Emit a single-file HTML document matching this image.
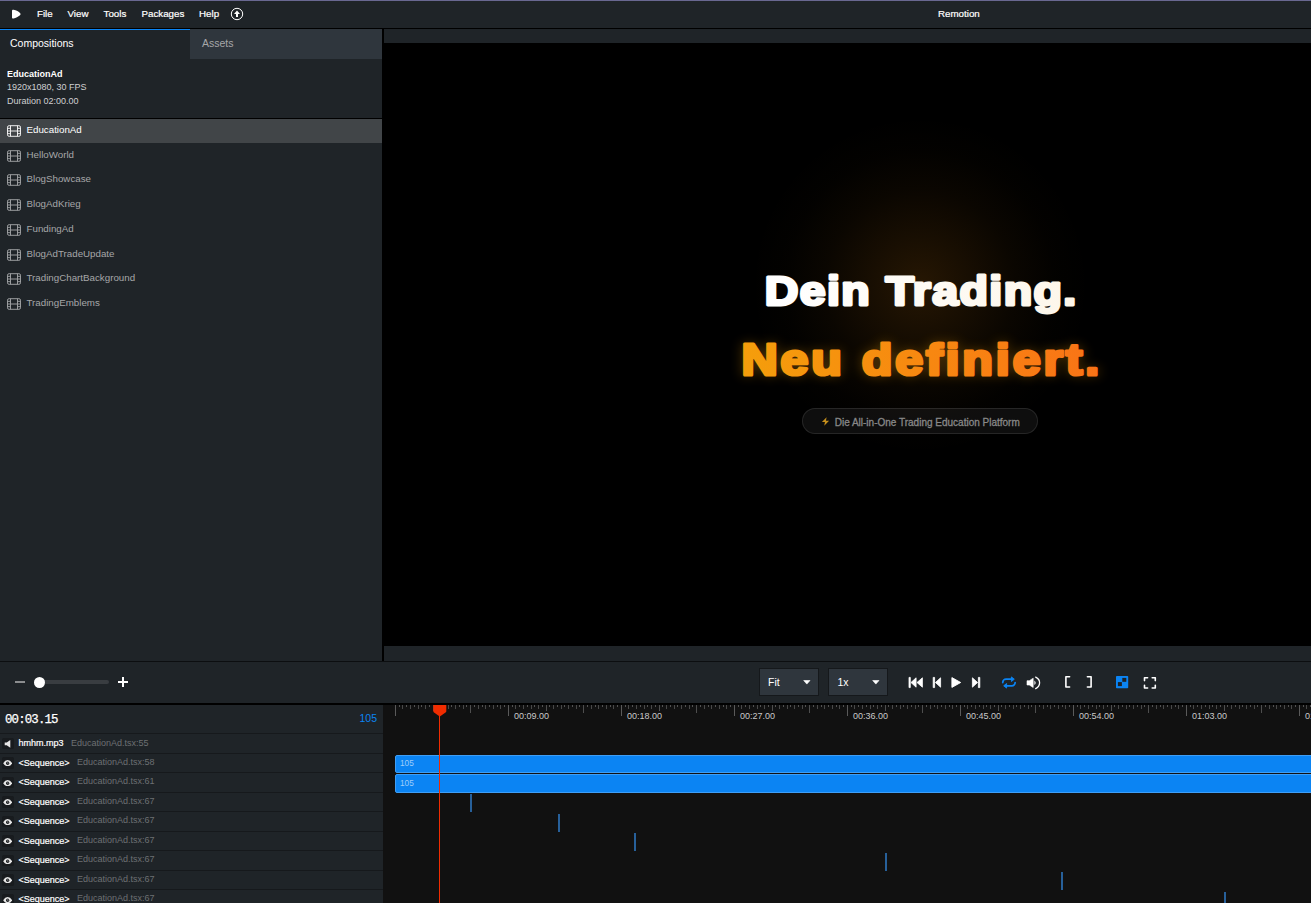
<!DOCTYPE html><html><head><meta charset="utf-8"><title>Remotion</title><style>
*{box-sizing:border-box;margin:0;padding:0}
html,body{width:1311px;height:903px;overflow:hidden;background:#1f2428;font-family:"Liberation Sans",sans-serif;color:#fff}
.abs{position:absolute}
#root{position:relative;width:1311px;height:903px;overflow:hidden;background:#1f2428}
.menu{position:absolute;top:8px;font-size:9.75px;line-height:11px;color:#fff;-webkit-text-stroke:0.2px #fff;white-space:nowrap}
.t{position:absolute;white-space:nowrap}
.comp{position:absolute;left:0;width:382px;height:24.1px}
.comp .nm{position:absolute;left:26.5px;top:4.95px;font-size:9.75px;line-height:11px;color:#a6a7a9;white-space:nowrap}
.comp svg{position:absolute;left:7px;top:5.9px}
.row{position:absolute;left:0;width:382.5px;height:19.5px;border-bottom:1px solid #16191c}
.row .btn{position:absolute;left:2.25px;top:3.4px;width:11.5px;height:11.5px;background:#181b1e;border-radius:1.5px}
.row .lb{position:absolute;left:18.5px;top:4px;font-size:9px;line-height:10px;color:#fff;-webkit-text-stroke:0.2px #fff;white-space:nowrap}
.row .loc{position:absolute;top:3.5px;font-size:9px;line-height:10px;color:#6d7073;white-space:nowrap}
.tick{position:absolute;top:705px;width:1px;background:#666}
.tl{position:absolute;top:710.5px;font-size:9px;line-height:10px;color:#c9c9c9;white-space:nowrap}
.bar{position:absolute;left:395px;width:1000px;height:18px;background:#0b84f3;border:1px solid #3f9ef5;border-radius:2px}
.bar span{position:absolute;left:4px;top:3.5px;font-size:8.25px;line-height:9px;color:#9fcdf9}
.mk{position:absolute;width:2px;height:18px;background:#27609a}
</style></head><body><div id="root">
<div class="abs" style="left:0;top:0;width:1311px;height:1px;background:#696891"></div>
<div class="abs" style="left:0;top:1px;width:1311px;height:27px;background:#1f2428"></div>
<div class="abs" style="left:0;top:28px;width:1311px;height:1px;background:#000"></div>
<svg class="abs" style="left:11px;top:9px" width="11" height="11" viewBox="0 0 11 11"><path d="M2.6 0.75 C5 1.1 8 2.7 9.2 4.3 C9.8 5 9.6 5.7 9 6.2 C7.2 7.6 4.8 8.9 2.6 9.5 C1.6 9.75 1 9.3 1 8.4 L1 1.9 C1 1 1.6 0.6 2.6 0.75 Z" fill="#fff"/></svg>
<div class="menu" style="left:37px">File</div>
<div class="menu" style="left:67.5px">View</div>
<div class="menu" style="left:103.5px">Tools</div>
<div class="menu" style="left:141.5px">Packages</div>
<div class="menu" style="left:199px">Help</div>
<svg class="abs" style="left:230px;top:7px" width="14" height="14" viewBox="0 0 14 14"><circle cx="7" cy="7" r="5.7" fill="none" stroke="#fff" stroke-width="1"/><path d="M7 3.6 L10 6.9 L8 6.9 L8 10 L6 10 L6 6.9 L4 6.9 Z" fill="#fff"/></svg>
<div class="menu" style="left:938px">Remotion</div>
<div class="abs" style="left:0;top:29px;width:190px;height:1.25px;background:#0b84f3"></div>
<div class="abs" style="left:190px;top:29px;width:192px;height:29.75px;background:#2f363d"></div>
<div class="t" style="left:10px;top:37px;font-size:10.5px;line-height:12px;color:#fff">Compositions</div>
<div class="t" style="left:202px;top:37px;font-size:10.5px;line-height:12px;color:#a6a7a9">Assets</div>
<div class="t" style="left:7px;top:68.75px;font-size:9px;line-height:10px;font-weight:bold;color:#fff">EducationAd</div>
<div class="t" style="left:7px;top:81.5px;font-size:9px;line-height:10px;color:#d0d1d2">1920x1080, 30 FPS</div>
<div class="t" style="left:7px;top:95.5px;font-size:9px;line-height:10px;color:#d0d1d2">Duration 02:00.00</div>
<div class="abs" style="left:0;top:118px;width:382px;height:1px;background:#000"></div>
<div class="comp" style="top:118.90px;background:#414548;"><svg width="14" height="12" viewBox="0 0 14 13" preserveAspectRatio="none"><g fill="none" stroke="#f2f2f2" stroke-width="1"><rect x="0.5" y="0.75" width="13" height="11.5" rx="1.6"/><path d="M3.5 0.75V12.25M10.5 0.75V12.25M3.5 6.5H10.5M0.5 3.6H3.5M0.5 6.5H3.5M0.5 9.4H3.5M10.5 3.6H13.5M10.5 6.5H13.5M10.5 9.4H13.5"/></g></svg><div class="nm" style="color:#fff">EducationAd</div></div>
<div class="comp" style="top:143.65px;"><svg width="14" height="12" viewBox="0 0 14 13" preserveAspectRatio="none"><g fill="none" stroke="#9fa1a3" stroke-width="1"><rect x="0.5" y="0.75" width="13" height="11.5" rx="1.6"/><path d="M3.5 0.75V12.25M10.5 0.75V12.25M3.5 6.5H10.5M0.5 3.6H3.5M0.5 6.5H3.5M0.5 9.4H3.5M10.5 3.6H13.5M10.5 6.5H13.5M10.5 9.4H13.5"/></g></svg><div class="nm" style="">HelloWorld</div></div>
<div class="comp" style="top:168.40px;"><svg width="14" height="12" viewBox="0 0 14 13" preserveAspectRatio="none"><g fill="none" stroke="#9fa1a3" stroke-width="1"><rect x="0.5" y="0.75" width="13" height="11.5" rx="1.6"/><path d="M3.5 0.75V12.25M10.5 0.75V12.25M3.5 6.5H10.5M0.5 3.6H3.5M0.5 6.5H3.5M0.5 9.4H3.5M10.5 3.6H13.5M10.5 6.5H13.5M10.5 9.4H13.5"/></g></svg><div class="nm" style="">BlogShowcase</div></div>
<div class="comp" style="top:193.15px;"><svg width="14" height="12" viewBox="0 0 14 13" preserveAspectRatio="none"><g fill="none" stroke="#9fa1a3" stroke-width="1"><rect x="0.5" y="0.75" width="13" height="11.5" rx="1.6"/><path d="M3.5 0.75V12.25M10.5 0.75V12.25M3.5 6.5H10.5M0.5 3.6H3.5M0.5 6.5H3.5M0.5 9.4H3.5M10.5 3.6H13.5M10.5 6.5H13.5M10.5 9.4H13.5"/></g></svg><div class="nm" style="">BlogAdKrieg</div></div>
<div class="comp" style="top:217.90px;"><svg width="14" height="12" viewBox="0 0 14 13" preserveAspectRatio="none"><g fill="none" stroke="#9fa1a3" stroke-width="1"><rect x="0.5" y="0.75" width="13" height="11.5" rx="1.6"/><path d="M3.5 0.75V12.25M10.5 0.75V12.25M3.5 6.5H10.5M0.5 3.6H3.5M0.5 6.5H3.5M0.5 9.4H3.5M10.5 3.6H13.5M10.5 6.5H13.5M10.5 9.4H13.5"/></g></svg><div class="nm" style="">FundingAd</div></div>
<div class="comp" style="top:242.65px;"><svg width="14" height="12" viewBox="0 0 14 13" preserveAspectRatio="none"><g fill="none" stroke="#9fa1a3" stroke-width="1"><rect x="0.5" y="0.75" width="13" height="11.5" rx="1.6"/><path d="M3.5 0.75V12.25M10.5 0.75V12.25M3.5 6.5H10.5M0.5 3.6H3.5M0.5 6.5H3.5M0.5 9.4H3.5M10.5 3.6H13.5M10.5 6.5H13.5M10.5 9.4H13.5"/></g></svg><div class="nm" style="">BlogAdTradeUpdate</div></div>
<div class="comp" style="top:267.40px;"><svg width="14" height="12" viewBox="0 0 14 13" preserveAspectRatio="none"><g fill="none" stroke="#9fa1a3" stroke-width="1"><rect x="0.5" y="0.75" width="13" height="11.5" rx="1.6"/><path d="M3.5 0.75V12.25M10.5 0.75V12.25M3.5 6.5H10.5M0.5 3.6H3.5M0.5 6.5H3.5M0.5 9.4H3.5M10.5 3.6H13.5M10.5 6.5H13.5M10.5 9.4H13.5"/></g></svg><div class="nm" style="">TradingChartBackground</div></div>
<div class="comp" style="top:292.15px;"><svg width="14" height="12" viewBox="0 0 14 13" preserveAspectRatio="none"><g fill="none" stroke="#9fa1a3" stroke-width="1"><rect x="0.5" y="0.75" width="13" height="11.5" rx="1.6"/><path d="M3.5 0.75V12.25M10.5 0.75V12.25M3.5 6.5H10.5M0.5 3.6H3.5M0.5 6.5H3.5M0.5 9.4H3.5M10.5 3.6H13.5M10.5 6.5H13.5M10.5 9.4H13.5"/></g></svg><div class="nm" style="">TradingEmblems</div></div>
<div class="abs" style="left:382px;top:29px;width:2px;height:632px;background:#000"></div>
<div class="abs" style="left:384px;top:43px;width:927px;height:603px;background:#000;overflow:hidden">
<div class="abs" style="left:0;top:0;width:1072px;height:603px;background:radial-gradient(circle at 536px 242px, rgba(245,145,20,0.155) 0px, rgba(245,145,20,0.10) 45px, rgba(245,145,20,0.045) 95px, rgba(245,145,20,0.012) 135px, rgba(245,145,20,0) 170px)"></div>
<svg class="abs" style="left:0;top:0;overflow:visible" width="1072" height="603" viewBox="0 0 1072 603"><defs><linearGradient id="og" gradientUnits="userSpaceOnUse" x1="359" y1="0" x2="715" y2="0"><stop offset="0" stop-color="#f59e0b"/><stop offset="1" stop-color="#f97316"/></linearGradient><linearGradient id="wg" gradientUnits="userSpaceOnUse" x1="382" y1="0" x2="692" y2="0"><stop offset="0" stop-color="#ffffff"/><stop offset="1" stop-color="#fdf6ea"/></linearGradient><linearGradient id="og2" gradientUnits="userSpaceOnUse" x1="0" y1="0" x2="313" y2="0"><stop offset="0" stop-color="#f59e0b"/><stop offset="1" stop-color="#f97316"/></linearGradient><linearGradient id="wg2" gradientUnits="userSpaceOnUse" x1="0" y1="0" x2="273" y2="0"><stop offset="0" stop-color="#ffffff"/><stop offset="1" stop-color="#fdf6ea"/></linearGradient><filter id="glow" x="-10%" y="-60%" width="120%" height="220%"><feGaussianBlur stdDeviation="5.5"/></filter></defs><g font-family="Liberation Sans, sans-serif" font-weight="bold" stroke-linejoin="round"><text transform="translate(357.5,332.2) scale(1.14,1)" font-size="44.0" textLength="313.86" lengthAdjust="spacing" fill="#f59e0b" stroke="#f59e0b" stroke-width="3.2" filter="url(#glow)" opacity="0.3">Neu definiert.</text><text transform="translate(380.8,262.0) scale(1.14,1)" font-size="40.8" textLength="273.16" lengthAdjust="spacing" fill="url(#wg2)" stroke="url(#wg2)" stroke-width="3.0">Dein Trading.</text><text transform="translate(357.5,332.2) scale(1.14,1)" font-size="44.0" textLength="313.86" lengthAdjust="spacing" fill="url(#og2)" stroke="url(#og2)" stroke-width="3.2">Neu definiert.</text></g></svg>
<div class="abs" style="left:418.2px;top:364.6px;width:235.4px;height:26.4px;border-radius:13.2px;background:rgba(255,255,255,0.055);border:1px solid rgba(255,255,255,0.10)"></div>
<svg class="abs" style="left:437px;top:374.3px" width="9" height="9" viewBox="0 0 10 11" preserveAspectRatio="none"><path d="M6.2 0.3 L1 6.2 L4.4 6.2 L3.6 10.7 L9 4.6 L5.5 4.6 Z" fill="#c48e1c"/></svg>
<div class="t" id="bt" style="left:450.7px;top:374px;font-size:10px;line-height:11px;color:#888;-webkit-text-stroke:0.3px #888">Die All-in-One Trading Education Platform</div>
</div>
<div class="abs" style="left:0;top:661px;width:1311px;height:1px;background:#0c0e10"></div>
<div class="abs" style="left:0;top:703px;width:1311px;height:2px;background:#000"></div>
<div class="abs" style="left:15px;top:681.4px;width:10px;height:1.2px;background:#8b8d8f"></div>
<div class="abs" style="left:35px;top:679.7px;width:74px;height:4.6px;border-radius:2.3px;background:#393d41"></div>
<div class="abs" style="left:34.4px;top:676.5px;width:11px;height:11px;border-radius:50%;background:#fff"></div>
<div class="abs" style="left:118px;top:681.4px;width:10px;height:1.2px;background:#fff"></div>
<div class="abs" style="left:122.4px;top:677px;width:1.2px;height:10px;background:#fff"></div>
<div class="abs" style="left:759.4px;top:668px;width:59.2px;height:28.3px;background:#2f363d;border:1px solid #15181b"></div>
<div class="t" style="left:768px;top:676px;font-size:10.5px;line-height:12px;color:#fff">Fit</div>
<svg class="abs" style="left:802.8px;top:680.3px" width="8" height="5" viewBox="0 0 8 5"><path d="M0.7 0.5 L7 0.5 L3.85 4.1 Z" fill="#fff" stroke="#fff" stroke-width="0.6" stroke-linejoin="round"/></svg>
<div class="abs" style="left:828.4px;top:668px;width:59.2px;height:28.3px;background:#2f363d;border:1px solid #15181b"></div>
<div class="t" style="left:837.5px;top:676px;font-size:10.5px;line-height:12px;color:#fff">1x</div>
<svg class="abs" style="left:871.8px;top:680.3px" width="8" height="5" viewBox="0 0 8 5"><path d="M0.7 0.5 L7 0.5 L3.85 4.1 Z" fill="#fff" stroke="#fff" stroke-width="0.6" stroke-linejoin="round"/></svg>
<svg class="abs" style="left:908px;top:676px" width="16" height="13" viewBox="0 0 16 13"><path d="M1 1.4 H2.3 V11.6 H1 Z M3 6.5 L8.1 1.8 V11.2 Z M9 6.5 L14.4 1.8 V11.2 Z" fill="#fff" stroke="#fff" stroke-width="0.8" stroke-linejoin="round"/></svg>
<svg class="abs" style="left:932px;top:676px" width="10" height="13" viewBox="0 0 10 13"><path d="M1.2 1.4 H2.6 V11.6 H1.2 Z M3.4 6.5 L8.6 1.8 V11.2 Z" fill="#fff" stroke="#fff" stroke-width="0.8" stroke-linejoin="round"/></svg>
<svg class="abs" style="left:951px;top:676px" width="11" height="13" viewBox="0 0 11 13"><path d="M0.9 1.6 L9.7 6.5 L0.9 11.4 Z" fill="#fff" stroke="#fff" stroke-width="0.9" stroke-linejoin="round"/></svg>
<svg class="abs" style="left:971px;top:676px" width="10" height="13" viewBox="0 0 10 13"><path d="M8.8 1.4 H7.4 V11.6 H8.8 Z M6.6 6.5 L1.4 1.8 V11.2 Z" fill="#fff" stroke="#fff" stroke-width="0.8" stroke-linejoin="round"/></svg>
<svg class="abs" style="left:1001px;top:676px" width="16" height="14" viewBox="0 0 16 14"><g fill="none" stroke="#0b84f3" stroke-width="1.75" stroke-linecap="round" stroke-linejoin="round"><path d="M1.75 6.5 A3.3 3.3 0 0 1 5.05 3.2 H10.6"/><path d="M14.15 6.5 A3.3 3.3 0 0 1 10.85 9.8 H5.4"/></g><path d="M10.4 0.9 L13.3 3.2 L10.4 5.5 Z M5.6 7.5 L2.7 9.8 L5.6 12.1 Z" fill="#0b84f3" stroke="#0b84f3" stroke-width="0.9" stroke-linejoin="round"/></svg>
<svg class="abs" style="left:1026px;top:675.5px" width="15" height="14" viewBox="0 0 15 14"><path d="M1 4.7 H3.3 L7.2 2.2 V11.5 L3.3 9 H1 Z" fill="#fff" stroke="#fff" stroke-width="0.6" stroke-linejoin="round"/><path d="M8.4 4.6 Q11 6.85 8.4 9.1 Z" fill="#fff"/><path d="M9.7 1.1 Q13.6 3 13.6 6.85 Q13.6 10.7 9.7 12.6" fill="none" stroke="#fff" stroke-width="1.3" stroke-linecap="round"/></svg>
<svg class="abs" style="left:1064px;top:675px" width="8" height="14" viewBox="0 0 8 14"><path d="M5.6 1.8 H1.9 V12 H5.6" fill="none" stroke="#fff" stroke-width="1.6" stroke-linecap="round" stroke-linejoin="round"/></svg>
<svg class="abs" style="left:1085px;top:675px" width="8" height="14" viewBox="0 0 8 14"><path d="M2.4 1.8 H6.1 V12 H2.4" fill="none" stroke="#fff" stroke-width="1.6" stroke-linecap="round" stroke-linejoin="round"/></svg>
<svg class="abs" style="left:1116px;top:676px" width="13" height="13" viewBox="0 0 13 13"><rect x="0" y="0" width="12.2" height="12.2" rx="0.8" fill="#0b84f3"/><rect x="6.3" y="1.9" width="4" height="3.9" fill="#1d2226"/><rect x="1.9" y="6.1" width="4" height="4" fill="#1d2226"/></svg>
<svg class="abs" style="left:1143px;top:676px" width="14" height="14" viewBox="0 0 14 14"><path d="M1.5 4.6 V1.7 H4.6 M9.2 1.7 H12.3 V4.6 M12.3 9.2 V12 H9.2 M4.6 12 H1.5 V9.2" fill="none" stroke="#fff" stroke-width="1.6" stroke-linejoin="round" stroke-linecap="round"/></svg>
<div class="abs" style="left:382.5px;top:705px;width:929px;height:198px;background:#111"></div>
<div class="abs" style="left:0;top:705px;width:382.5px;height:198px;background:#1f2428"></div>
<div class="t" style="left:5px;top:713.6px;font-family:'Liberation Mono',monospace;font-size:12.4px;letter-spacing:-0.85px;line-height:12px;color:#fff;-webkit-text-stroke:0.25px #fff">00:03.15</div>
<div class="t" style="left:359.5px;top:712px;font-size:10.5px;line-height:12px;color:#0b84f3">105</div>
<div class="abs" style="left:0;top:733.4px;width:382.5px;height:1px;background:#16191c"></div>
<div class="row" style="top:734.40px"><div class="btn"><svg style="position:absolute;left:1.75px;top:1.8px" width="8" height="8" viewBox="0 0 8 8"><path d="M0.7 2.5 H2.7 L6.3 0.1 V7.7 L2.7 5.3 H0.7 Z" fill="#e6e6e6"/></svg></div><div class="lb">hmhm.mp3</div><div class="loc" style="left:71px;top:4px">EducationAd.tsx:55</div></div>
<div class="row" style="top:753.90px"><div class="btn"><svg style="position:absolute;left:0.75px;top:2.8px" width="9.3" height="6.4" viewBox="0 0 10 6.4" preserveAspectRatio="none"><path d="M0.2 3.2 Q2.2 0.1 5 0.1 Q7.8 0.1 9.8 3.2 Q7.8 6.3 5 6.3 Q2.2 6.3 0.2 3.2 Z" fill="#e6e6e6"/><circle cx="5" cy="3.2" r="1.75" fill="#181b1e"/><circle cx="5.2" cy="3" r="0.75" fill="#9a9a9a"/></svg></div><div class="lb">&lt;Sequence&gt;</div><div class="loc" style="left:77px;top:3px">EducationAd.tsx:58</div></div>
<div class="row" style="top:773.40px"><div class="btn"><svg style="position:absolute;left:0.75px;top:2.8px" width="9.3" height="6.4" viewBox="0 0 10 6.4" preserveAspectRatio="none"><path d="M0.2 3.2 Q2.2 0.1 5 0.1 Q7.8 0.1 9.8 3.2 Q7.8 6.3 5 6.3 Q2.2 6.3 0.2 3.2 Z" fill="#e6e6e6"/><circle cx="5" cy="3.2" r="1.75" fill="#181b1e"/><circle cx="5.2" cy="3" r="0.75" fill="#9a9a9a"/></svg></div><div class="lb">&lt;Sequence&gt;</div><div class="loc" style="left:77px;top:3px">EducationAd.tsx:61</div></div>
<div class="row" style="top:792.90px"><div class="btn"><svg style="position:absolute;left:0.75px;top:2.8px" width="9.3" height="6.4" viewBox="0 0 10 6.4" preserveAspectRatio="none"><path d="M0.2 3.2 Q2.2 0.1 5 0.1 Q7.8 0.1 9.8 3.2 Q7.8 6.3 5 6.3 Q2.2 6.3 0.2 3.2 Z" fill="#e6e6e6"/><circle cx="5" cy="3.2" r="1.75" fill="#181b1e"/><circle cx="5.2" cy="3" r="0.75" fill="#9a9a9a"/></svg></div><div class="lb">&lt;Sequence&gt;</div><div class="loc" style="left:77px;top:3px">EducationAd.tsx:67</div></div>
<div class="row" style="top:812.40px"><div class="btn"><svg style="position:absolute;left:0.75px;top:2.8px" width="9.3" height="6.4" viewBox="0 0 10 6.4" preserveAspectRatio="none"><path d="M0.2 3.2 Q2.2 0.1 5 0.1 Q7.8 0.1 9.8 3.2 Q7.8 6.3 5 6.3 Q2.2 6.3 0.2 3.2 Z" fill="#e6e6e6"/><circle cx="5" cy="3.2" r="1.75" fill="#181b1e"/><circle cx="5.2" cy="3" r="0.75" fill="#9a9a9a"/></svg></div><div class="lb">&lt;Sequence&gt;</div><div class="loc" style="left:77px;top:3px">EducationAd.tsx:67</div></div>
<div class="row" style="top:831.90px"><div class="btn"><svg style="position:absolute;left:0.75px;top:2.8px" width="9.3" height="6.4" viewBox="0 0 10 6.4" preserveAspectRatio="none"><path d="M0.2 3.2 Q2.2 0.1 5 0.1 Q7.8 0.1 9.8 3.2 Q7.8 6.3 5 6.3 Q2.2 6.3 0.2 3.2 Z" fill="#e6e6e6"/><circle cx="5" cy="3.2" r="1.75" fill="#181b1e"/><circle cx="5.2" cy="3" r="0.75" fill="#9a9a9a"/></svg></div><div class="lb">&lt;Sequence&gt;</div><div class="loc" style="left:77px;top:3px">EducationAd.tsx:67</div></div>
<div class="row" style="top:851.40px"><div class="btn"><svg style="position:absolute;left:0.75px;top:2.8px" width="9.3" height="6.4" viewBox="0 0 10 6.4" preserveAspectRatio="none"><path d="M0.2 3.2 Q2.2 0.1 5 0.1 Q7.8 0.1 9.8 3.2 Q7.8 6.3 5 6.3 Q2.2 6.3 0.2 3.2 Z" fill="#e6e6e6"/><circle cx="5" cy="3.2" r="1.75" fill="#181b1e"/><circle cx="5.2" cy="3" r="0.75" fill="#9a9a9a"/></svg></div><div class="lb">&lt;Sequence&gt;</div><div class="loc" style="left:77px;top:3px">EducationAd.tsx:67</div></div>
<div class="row" style="top:870.90px"><div class="btn"><svg style="position:absolute;left:0.75px;top:2.8px" width="9.3" height="6.4" viewBox="0 0 10 6.4" preserveAspectRatio="none"><path d="M0.2 3.2 Q2.2 0.1 5 0.1 Q7.8 0.1 9.8 3.2 Q7.8 6.3 5 6.3 Q2.2 6.3 0.2 3.2 Z" fill="#e6e6e6"/><circle cx="5" cy="3.2" r="1.75" fill="#181b1e"/><circle cx="5.2" cy="3" r="0.75" fill="#9a9a9a"/></svg></div><div class="lb">&lt;Sequence&gt;</div><div class="loc" style="left:77px;top:3px">EducationAd.tsx:67</div></div>
<div class="row" style="top:890.40px"><div class="btn"><svg style="position:absolute;left:0.75px;top:2.8px" width="9.3" height="6.4" viewBox="0 0 10 6.4" preserveAspectRatio="none"><path d="M0.2 3.2 Q2.2 0.1 5 0.1 Q7.8 0.1 9.8 3.2 Q7.8 6.3 5 6.3 Q2.2 6.3 0.2 3.2 Z" fill="#e6e6e6"/><circle cx="5" cy="3.2" r="1.75" fill="#181b1e"/><circle cx="5.2" cy="3" r="0.75" fill="#9a9a9a"/></svg></div><div class="lb">&lt;Sequence&gt;</div><div class="loc" style="left:77px;top:3px">EducationAd.tsx:67</div></div>
<div class="tick" style="left:394.90px;height:10.6px;background:#5a5a5a"></div>
<div class="tick" style="left:398.67px;height:1.6px;background:#525252"></div>
<div class="tick" style="left:402.43px;height:4px;background:#484848"></div>
<div class="tick" style="left:406.20px;height:1.6px;background:#525252"></div>
<div class="tick" style="left:409.97px;height:4px;background:#484848"></div>
<div class="tick" style="left:413.73px;height:1.6px;background:#525252"></div>
<div class="tick" style="left:417.50px;height:4px;background:#484848"></div>
<div class="tick" style="left:421.27px;height:1.6px;background:#525252"></div>
<div class="tick" style="left:425.03px;height:4px;background:#484848"></div>
<div class="tick" style="left:428.80px;height:1.6px;background:#525252"></div>
<div class="tick" style="left:432.57px;height:6px;background:#4e4e4e"></div>
<div class="tick" style="left:436.33px;height:1.6px;background:#525252"></div>
<div class="tick" style="left:440.10px;height:4px;background:#484848"></div>
<div class="tick" style="left:443.87px;height:1.6px;background:#525252"></div>
<div class="tick" style="left:447.63px;height:4px;background:#484848"></div>
<div class="tick" style="left:451.40px;height:1.6px;background:#525252"></div>
<div class="tick" style="left:455.17px;height:4px;background:#484848"></div>
<div class="tick" style="left:458.93px;height:1.6px;background:#525252"></div>
<div class="tick" style="left:462.70px;height:4px;background:#484848"></div>
<div class="tick" style="left:466.47px;height:1.6px;background:#525252"></div>
<div class="tick" style="left:470.23px;height:8px;background:#4e4e4e"></div>
<div class="tick" style="left:474.00px;height:1.6px;background:#525252"></div>
<div class="tick" style="left:477.77px;height:4px;background:#484848"></div>
<div class="tick" style="left:481.53px;height:1.6px;background:#525252"></div>
<div class="tick" style="left:485.30px;height:4px;background:#484848"></div>
<div class="tick" style="left:489.07px;height:1.6px;background:#525252"></div>
<div class="tick" style="left:492.83px;height:4px;background:#484848"></div>
<div class="tick" style="left:496.60px;height:1.6px;background:#525252"></div>
<div class="tick" style="left:500.37px;height:4px;background:#484848"></div>
<div class="tick" style="left:504.13px;height:1.6px;background:#525252"></div>
<div class="tick" style="left:507.90px;height:10.6px;background:#5a5a5a"></div>
<div class="tl" style="left:514.00px">00:09.00</div>
<div class="tick" style="left:511.67px;height:1.6px;background:#525252"></div>
<div class="tick" style="left:515.43px;height:4px;background:#484848"></div>
<div class="tick" style="left:519.20px;height:1.6px;background:#525252"></div>
<div class="tick" style="left:522.97px;height:4px;background:#484848"></div>
<div class="tick" style="left:526.73px;height:1.6px;background:#525252"></div>
<div class="tick" style="left:530.50px;height:4px;background:#484848"></div>
<div class="tick" style="left:534.27px;height:1.6px;background:#525252"></div>
<div class="tick" style="left:538.03px;height:4px;background:#484848"></div>
<div class="tick" style="left:541.80px;height:1.6px;background:#525252"></div>
<div class="tick" style="left:545.57px;height:6px;background:#4e4e4e"></div>
<div class="tick" style="left:549.33px;height:1.6px;background:#525252"></div>
<div class="tick" style="left:553.10px;height:4px;background:#484848"></div>
<div class="tick" style="left:556.87px;height:1.6px;background:#525252"></div>
<div class="tick" style="left:560.63px;height:4px;background:#484848"></div>
<div class="tick" style="left:564.40px;height:1.6px;background:#525252"></div>
<div class="tick" style="left:568.17px;height:4px;background:#484848"></div>
<div class="tick" style="left:571.93px;height:1.6px;background:#525252"></div>
<div class="tick" style="left:575.70px;height:4px;background:#484848"></div>
<div class="tick" style="left:579.47px;height:1.6px;background:#525252"></div>
<div class="tick" style="left:583.23px;height:8px;background:#4e4e4e"></div>
<div class="tick" style="left:587.00px;height:1.6px;background:#525252"></div>
<div class="tick" style="left:590.77px;height:4px;background:#484848"></div>
<div class="tick" style="left:594.53px;height:1.6px;background:#525252"></div>
<div class="tick" style="left:598.30px;height:4px;background:#484848"></div>
<div class="tick" style="left:602.07px;height:1.6px;background:#525252"></div>
<div class="tick" style="left:605.83px;height:4px;background:#484848"></div>
<div class="tick" style="left:609.60px;height:1.6px;background:#525252"></div>
<div class="tick" style="left:613.37px;height:4px;background:#484848"></div>
<div class="tick" style="left:617.13px;height:1.6px;background:#525252"></div>
<div class="tick" style="left:620.90px;height:10.6px;background:#5a5a5a"></div>
<div class="tl" style="left:627.00px">00:18.00</div>
<div class="tick" style="left:624.67px;height:1.6px;background:#525252"></div>
<div class="tick" style="left:628.43px;height:4px;background:#484848"></div>
<div class="tick" style="left:632.20px;height:1.6px;background:#525252"></div>
<div class="tick" style="left:635.97px;height:4px;background:#484848"></div>
<div class="tick" style="left:639.73px;height:1.6px;background:#525252"></div>
<div class="tick" style="left:643.50px;height:4px;background:#484848"></div>
<div class="tick" style="left:647.27px;height:1.6px;background:#525252"></div>
<div class="tick" style="left:651.03px;height:4px;background:#484848"></div>
<div class="tick" style="left:654.80px;height:1.6px;background:#525252"></div>
<div class="tick" style="left:658.57px;height:6px;background:#4e4e4e"></div>
<div class="tick" style="left:662.33px;height:1.6px;background:#525252"></div>
<div class="tick" style="left:666.10px;height:4px;background:#484848"></div>
<div class="tick" style="left:669.87px;height:1.6px;background:#525252"></div>
<div class="tick" style="left:673.63px;height:4px;background:#484848"></div>
<div class="tick" style="left:677.40px;height:1.6px;background:#525252"></div>
<div class="tick" style="left:681.17px;height:4px;background:#484848"></div>
<div class="tick" style="left:684.93px;height:1.6px;background:#525252"></div>
<div class="tick" style="left:688.70px;height:4px;background:#484848"></div>
<div class="tick" style="left:692.47px;height:1.6px;background:#525252"></div>
<div class="tick" style="left:696.23px;height:8px;background:#4e4e4e"></div>
<div class="tick" style="left:700.00px;height:1.6px;background:#525252"></div>
<div class="tick" style="left:703.77px;height:4px;background:#484848"></div>
<div class="tick" style="left:707.53px;height:1.6px;background:#525252"></div>
<div class="tick" style="left:711.30px;height:4px;background:#484848"></div>
<div class="tick" style="left:715.07px;height:1.6px;background:#525252"></div>
<div class="tick" style="left:718.83px;height:4px;background:#484848"></div>
<div class="tick" style="left:722.60px;height:1.6px;background:#525252"></div>
<div class="tick" style="left:726.37px;height:4px;background:#484848"></div>
<div class="tick" style="left:730.13px;height:1.6px;background:#525252"></div>
<div class="tick" style="left:733.90px;height:10.6px;background:#5a5a5a"></div>
<div class="tl" style="left:740.00px">00:27.00</div>
<div class="tick" style="left:737.67px;height:1.6px;background:#525252"></div>
<div class="tick" style="left:741.43px;height:4px;background:#484848"></div>
<div class="tick" style="left:745.20px;height:1.6px;background:#525252"></div>
<div class="tick" style="left:748.97px;height:4px;background:#484848"></div>
<div class="tick" style="left:752.73px;height:1.6px;background:#525252"></div>
<div class="tick" style="left:756.50px;height:4px;background:#484848"></div>
<div class="tick" style="left:760.27px;height:1.6px;background:#525252"></div>
<div class="tick" style="left:764.03px;height:4px;background:#484848"></div>
<div class="tick" style="left:767.80px;height:1.6px;background:#525252"></div>
<div class="tick" style="left:771.57px;height:6px;background:#4e4e4e"></div>
<div class="tick" style="left:775.33px;height:1.6px;background:#525252"></div>
<div class="tick" style="left:779.10px;height:4px;background:#484848"></div>
<div class="tick" style="left:782.87px;height:1.6px;background:#525252"></div>
<div class="tick" style="left:786.63px;height:4px;background:#484848"></div>
<div class="tick" style="left:790.40px;height:1.6px;background:#525252"></div>
<div class="tick" style="left:794.17px;height:4px;background:#484848"></div>
<div class="tick" style="left:797.93px;height:1.6px;background:#525252"></div>
<div class="tick" style="left:801.70px;height:4px;background:#484848"></div>
<div class="tick" style="left:805.47px;height:1.6px;background:#525252"></div>
<div class="tick" style="left:809.23px;height:8px;background:#4e4e4e"></div>
<div class="tick" style="left:813.00px;height:1.6px;background:#525252"></div>
<div class="tick" style="left:816.77px;height:4px;background:#484848"></div>
<div class="tick" style="left:820.53px;height:1.6px;background:#525252"></div>
<div class="tick" style="left:824.30px;height:4px;background:#484848"></div>
<div class="tick" style="left:828.07px;height:1.6px;background:#525252"></div>
<div class="tick" style="left:831.83px;height:4px;background:#484848"></div>
<div class="tick" style="left:835.60px;height:1.6px;background:#525252"></div>
<div class="tick" style="left:839.37px;height:4px;background:#484848"></div>
<div class="tick" style="left:843.13px;height:1.6px;background:#525252"></div>
<div class="tick" style="left:846.90px;height:10.6px;background:#5a5a5a"></div>
<div class="tl" style="left:853.00px">00:36.00</div>
<div class="tick" style="left:850.67px;height:1.6px;background:#525252"></div>
<div class="tick" style="left:854.43px;height:4px;background:#484848"></div>
<div class="tick" style="left:858.20px;height:1.6px;background:#525252"></div>
<div class="tick" style="left:861.97px;height:4px;background:#484848"></div>
<div class="tick" style="left:865.73px;height:1.6px;background:#525252"></div>
<div class="tick" style="left:869.50px;height:4px;background:#484848"></div>
<div class="tick" style="left:873.27px;height:1.6px;background:#525252"></div>
<div class="tick" style="left:877.03px;height:4px;background:#484848"></div>
<div class="tick" style="left:880.80px;height:1.6px;background:#525252"></div>
<div class="tick" style="left:884.57px;height:6px;background:#4e4e4e"></div>
<div class="tick" style="left:888.33px;height:1.6px;background:#525252"></div>
<div class="tick" style="left:892.10px;height:4px;background:#484848"></div>
<div class="tick" style="left:895.87px;height:1.6px;background:#525252"></div>
<div class="tick" style="left:899.63px;height:4px;background:#484848"></div>
<div class="tick" style="left:903.40px;height:1.6px;background:#525252"></div>
<div class="tick" style="left:907.17px;height:4px;background:#484848"></div>
<div class="tick" style="left:910.93px;height:1.6px;background:#525252"></div>
<div class="tick" style="left:914.70px;height:4px;background:#484848"></div>
<div class="tick" style="left:918.47px;height:1.6px;background:#525252"></div>
<div class="tick" style="left:922.23px;height:8px;background:#4e4e4e"></div>
<div class="tick" style="left:926.00px;height:1.6px;background:#525252"></div>
<div class="tick" style="left:929.77px;height:4px;background:#484848"></div>
<div class="tick" style="left:933.53px;height:1.6px;background:#525252"></div>
<div class="tick" style="left:937.30px;height:4px;background:#484848"></div>
<div class="tick" style="left:941.07px;height:1.6px;background:#525252"></div>
<div class="tick" style="left:944.83px;height:4px;background:#484848"></div>
<div class="tick" style="left:948.60px;height:1.6px;background:#525252"></div>
<div class="tick" style="left:952.37px;height:4px;background:#484848"></div>
<div class="tick" style="left:956.13px;height:1.6px;background:#525252"></div>
<div class="tick" style="left:959.90px;height:10.6px;background:#5a5a5a"></div>
<div class="tl" style="left:966.00px">00:45.00</div>
<div class="tick" style="left:963.67px;height:1.6px;background:#525252"></div>
<div class="tick" style="left:967.43px;height:4px;background:#484848"></div>
<div class="tick" style="left:971.20px;height:1.6px;background:#525252"></div>
<div class="tick" style="left:974.97px;height:4px;background:#484848"></div>
<div class="tick" style="left:978.73px;height:1.6px;background:#525252"></div>
<div class="tick" style="left:982.50px;height:4px;background:#484848"></div>
<div class="tick" style="left:986.27px;height:1.6px;background:#525252"></div>
<div class="tick" style="left:990.03px;height:4px;background:#484848"></div>
<div class="tick" style="left:993.80px;height:1.6px;background:#525252"></div>
<div class="tick" style="left:997.57px;height:6px;background:#4e4e4e"></div>
<div class="tick" style="left:1001.33px;height:1.6px;background:#525252"></div>
<div class="tick" style="left:1005.10px;height:4px;background:#484848"></div>
<div class="tick" style="left:1008.87px;height:1.6px;background:#525252"></div>
<div class="tick" style="left:1012.63px;height:4px;background:#484848"></div>
<div class="tick" style="left:1016.40px;height:1.6px;background:#525252"></div>
<div class="tick" style="left:1020.17px;height:4px;background:#484848"></div>
<div class="tick" style="left:1023.93px;height:1.6px;background:#525252"></div>
<div class="tick" style="left:1027.70px;height:4px;background:#484848"></div>
<div class="tick" style="left:1031.47px;height:1.6px;background:#525252"></div>
<div class="tick" style="left:1035.23px;height:8px;background:#4e4e4e"></div>
<div class="tick" style="left:1039.00px;height:1.6px;background:#525252"></div>
<div class="tick" style="left:1042.77px;height:4px;background:#484848"></div>
<div class="tick" style="left:1046.53px;height:1.6px;background:#525252"></div>
<div class="tick" style="left:1050.30px;height:4px;background:#484848"></div>
<div class="tick" style="left:1054.07px;height:1.6px;background:#525252"></div>
<div class="tick" style="left:1057.83px;height:4px;background:#484848"></div>
<div class="tick" style="left:1061.60px;height:1.6px;background:#525252"></div>
<div class="tick" style="left:1065.37px;height:4px;background:#484848"></div>
<div class="tick" style="left:1069.13px;height:1.6px;background:#525252"></div>
<div class="tick" style="left:1072.90px;height:10.6px;background:#5a5a5a"></div>
<div class="tl" style="left:1079.00px">00:54.00</div>
<div class="tick" style="left:1076.67px;height:1.6px;background:#525252"></div>
<div class="tick" style="left:1080.43px;height:4px;background:#484848"></div>
<div class="tick" style="left:1084.20px;height:1.6px;background:#525252"></div>
<div class="tick" style="left:1087.97px;height:4px;background:#484848"></div>
<div class="tick" style="left:1091.73px;height:1.6px;background:#525252"></div>
<div class="tick" style="left:1095.50px;height:4px;background:#484848"></div>
<div class="tick" style="left:1099.27px;height:1.6px;background:#525252"></div>
<div class="tick" style="left:1103.03px;height:4px;background:#484848"></div>
<div class="tick" style="left:1106.80px;height:1.6px;background:#525252"></div>
<div class="tick" style="left:1110.57px;height:6px;background:#4e4e4e"></div>
<div class="tick" style="left:1114.33px;height:1.6px;background:#525252"></div>
<div class="tick" style="left:1118.10px;height:4px;background:#484848"></div>
<div class="tick" style="left:1121.87px;height:1.6px;background:#525252"></div>
<div class="tick" style="left:1125.63px;height:4px;background:#484848"></div>
<div class="tick" style="left:1129.40px;height:1.6px;background:#525252"></div>
<div class="tick" style="left:1133.17px;height:4px;background:#484848"></div>
<div class="tick" style="left:1136.93px;height:1.6px;background:#525252"></div>
<div class="tick" style="left:1140.70px;height:4px;background:#484848"></div>
<div class="tick" style="left:1144.47px;height:1.6px;background:#525252"></div>
<div class="tick" style="left:1148.23px;height:8px;background:#4e4e4e"></div>
<div class="tick" style="left:1152.00px;height:1.6px;background:#525252"></div>
<div class="tick" style="left:1155.77px;height:4px;background:#484848"></div>
<div class="tick" style="left:1159.53px;height:1.6px;background:#525252"></div>
<div class="tick" style="left:1163.30px;height:4px;background:#484848"></div>
<div class="tick" style="left:1167.07px;height:1.6px;background:#525252"></div>
<div class="tick" style="left:1170.83px;height:4px;background:#484848"></div>
<div class="tick" style="left:1174.60px;height:1.6px;background:#525252"></div>
<div class="tick" style="left:1178.37px;height:4px;background:#484848"></div>
<div class="tick" style="left:1182.13px;height:1.6px;background:#525252"></div>
<div class="tick" style="left:1185.90px;height:10.6px;background:#5a5a5a"></div>
<div class="tl" style="left:1192.00px">01:03.00</div>
<div class="tick" style="left:1189.67px;height:1.6px;background:#525252"></div>
<div class="tick" style="left:1193.43px;height:4px;background:#484848"></div>
<div class="tick" style="left:1197.20px;height:1.6px;background:#525252"></div>
<div class="tick" style="left:1200.97px;height:4px;background:#484848"></div>
<div class="tick" style="left:1204.73px;height:1.6px;background:#525252"></div>
<div class="tick" style="left:1208.50px;height:4px;background:#484848"></div>
<div class="tick" style="left:1212.27px;height:1.6px;background:#525252"></div>
<div class="tick" style="left:1216.03px;height:4px;background:#484848"></div>
<div class="tick" style="left:1219.80px;height:1.6px;background:#525252"></div>
<div class="tick" style="left:1223.57px;height:6px;background:#4e4e4e"></div>
<div class="tick" style="left:1227.33px;height:1.6px;background:#525252"></div>
<div class="tick" style="left:1231.10px;height:4px;background:#484848"></div>
<div class="tick" style="left:1234.87px;height:1.6px;background:#525252"></div>
<div class="tick" style="left:1238.63px;height:4px;background:#484848"></div>
<div class="tick" style="left:1242.40px;height:1.6px;background:#525252"></div>
<div class="tick" style="left:1246.17px;height:4px;background:#484848"></div>
<div class="tick" style="left:1249.93px;height:1.6px;background:#525252"></div>
<div class="tick" style="left:1253.70px;height:4px;background:#484848"></div>
<div class="tick" style="left:1257.47px;height:1.6px;background:#525252"></div>
<div class="tick" style="left:1261.23px;height:8px;background:#4e4e4e"></div>
<div class="tick" style="left:1265.00px;height:1.6px;background:#525252"></div>
<div class="tick" style="left:1268.77px;height:4px;background:#484848"></div>
<div class="tick" style="left:1272.53px;height:1.6px;background:#525252"></div>
<div class="tick" style="left:1276.30px;height:4px;background:#484848"></div>
<div class="tick" style="left:1280.07px;height:1.6px;background:#525252"></div>
<div class="tick" style="left:1283.83px;height:4px;background:#484848"></div>
<div class="tick" style="left:1287.60px;height:1.6px;background:#525252"></div>
<div class="tick" style="left:1291.37px;height:4px;background:#484848"></div>
<div class="tick" style="left:1295.13px;height:1.6px;background:#525252"></div>
<div class="tick" style="left:1298.90px;height:10.6px;background:#5a5a5a"></div>
<div class="tl" style="left:1305.00px">01:12.00</div>
<div class="tick" style="left:1302.67px;height:1.6px;background:#525252"></div>
<div class="tick" style="left:1306.43px;height:4px;background:#484848"></div>
<div class="tick" style="left:1310.20px;height:1.6px;background:#525252"></div>
<div class="bar" style="top:755px;height:18px"><span style="top:2.5px">105</span></div>
<div class="bar" style="top:774px;height:19px"><span style="top:3.5px">105</span></div>
<div class="mk" style="top:794.00px;left:470.00px"></div>
<div class="mk" style="top:813.50px;left:558.00px"></div>
<div class="mk" style="top:833.00px;left:634.00px"></div>
<div class="mk" style="top:852.50px;left:885.00px"></div>
<div class="mk" style="top:872.00px;left:1061.00px"></div>
<div class="mk" style="top:891.50px;left:1224.00px"></div>
<div class="abs" style="left:438.9px;top:705px;width:1.3px;height:198px;background:#f02c00"></div>
<svg class="abs" style="left:432.5px;top:705px" width="14" height="12" viewBox="0 0 14 12"><path d="M0.3 0 H13.3 V6 Q13.3 7 12.5 7.6 L7.6 11 Q6.8 11.5 6 11 L1.1 7.6 Q0.3 7 0.3 6 Z" fill="#f02c00"/></svg>
</div></body></html>
